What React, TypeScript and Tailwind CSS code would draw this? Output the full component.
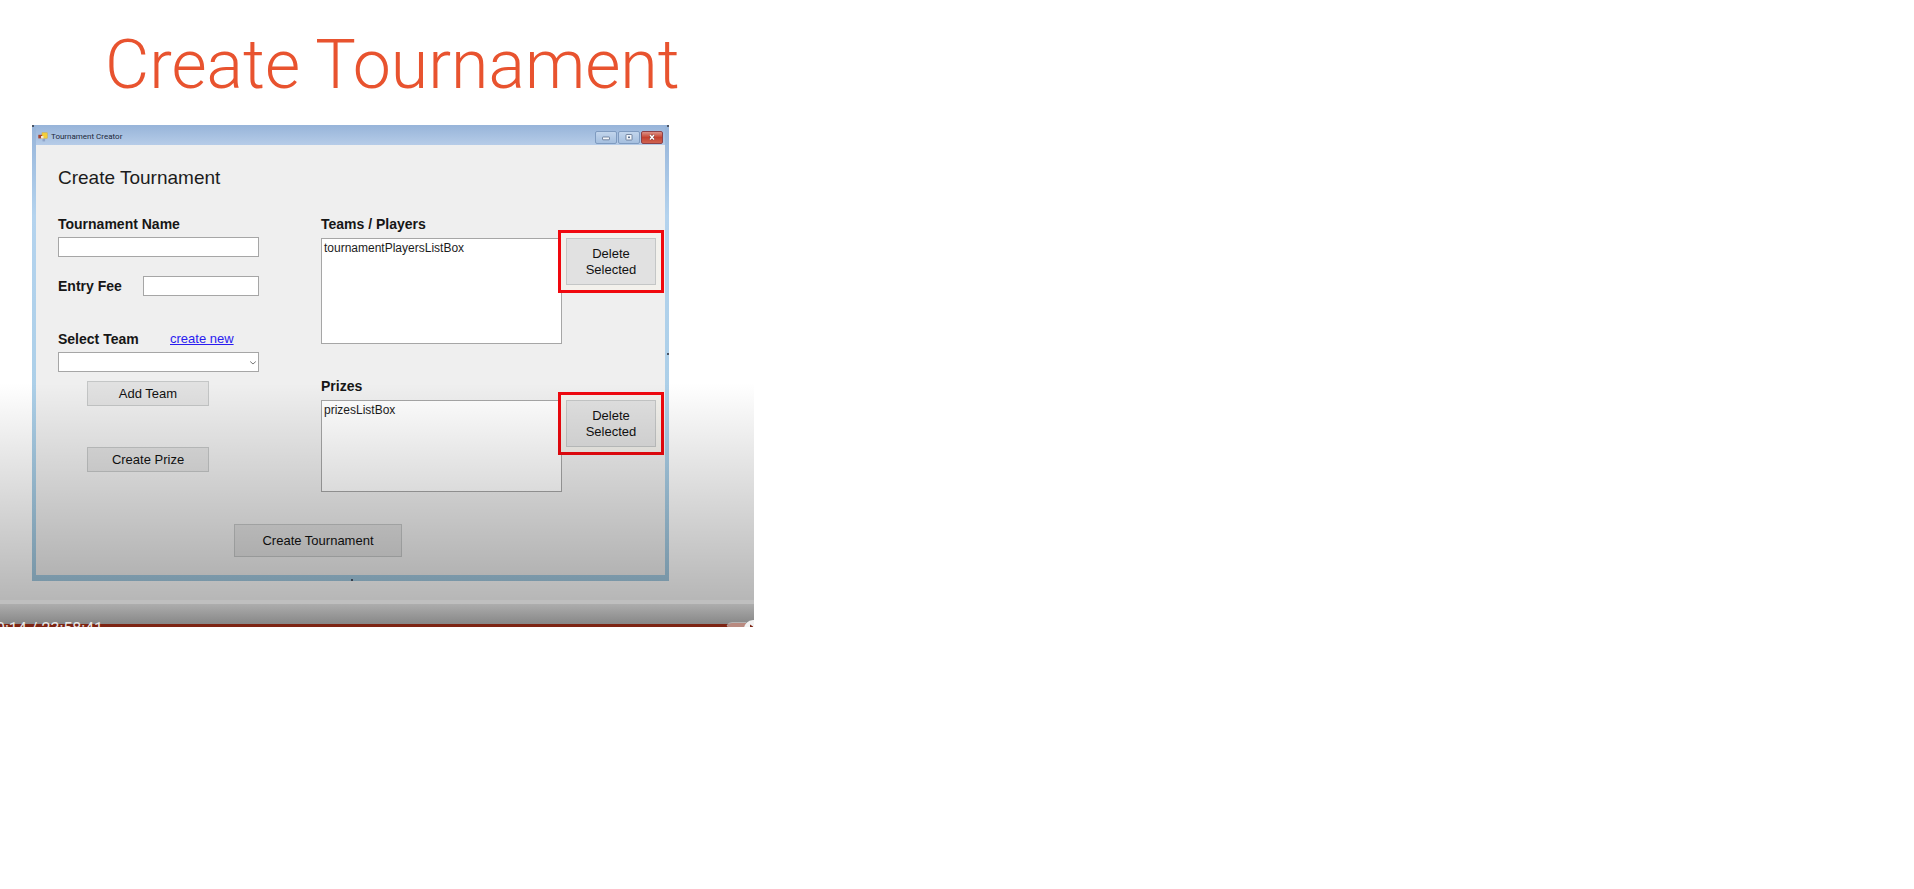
import React from "react";

const buttonClass =
  "border border-[#c4c6c6] bg-[#e1e1e1] text-center text-[13px] leading-4 text-[#111111]";
const labelClass = "text-[14px] font-bold leading-4 text-[#161616]";
const fieldClass = "border border-[#a6a6a6] bg-white px-1 text-[12px] outline-none";
const captionButtonClass =
  "h-[13px] w-[22px] rounded-xs border border-[#7f9bc0] bg-linear-to-b from-[#c2d5ec] to-[#a5bfdf]";
const handleClass = "absolute h-[2px] w-[2px] bg-[#4a5566]";

function DeleteButton() {
  return (
    <div className="relative mt-[22px] h-[47px] w-[90px] shrink-0">
      <div className="absolute -bottom-2 -left-2 -right-2 -top-2 border-3 border-[#f0080e] bg-[#f3f1ec]" />
      <button type="button" className={`relative h-full w-full ${buttonClass}`}>
        Delete
        <br />
        Selected
      </button>
    </div>
  );
}

type ListPanelProps = { id: string; title: string; item: string; listClass: string };

function ListPanel({ id, title, item, listClass }: ListPanelProps) {
  return (
    <div className="flex gap-1">
      <div className="min-w-0 flex-1">
        <h3 id={id} className={labelClass}>
          {title}
        </h3>
        <ul
          aria-labelledby={id}
          className={`mt-[6px] border border-[#a6a6a6] bg-white px-[2px] pt-px text-[12px] leading-4 text-[#1c1c1c] ${listClass}`}
        >
          <li>{item}</li>
        </ul>
      </div>
      <DeleteButton />
    </div>
  );
}

function FormIcon() {
  return (
    <svg viewBox="0 0 10 10" className="h-[10px] w-[10px]" aria-hidden="true">
      <rect x="4" y="0.8" width="5.2" height="5.4" fill="#f3cf3a" stroke="#d9a92c" strokeWidth="0.5" />
      <rect x="0.3" y="2.8" width="3.8" height="3.6" fill="#a8432f" />
      <rect x="3" y="4" width="2.5" height="2.5" fill="#f6ead0" />
      <rect x="4.5" y="6.8" width="2.6" height="2.6" fill="#8fa3c8" />
    </svg>
  );
}

function TitleBar() {
  return (
    <div className="flex h-[20px] items-center bg-linear-to-b from-[#97b4d9] to-[#b6cce8] pl-[2px] pr-[2px] pt-1">
      <FormIcon />
      <span className="ml-[3px] flex-1 font-[Roboto,sans-serif] text-[8px] leading-3 text-[#20283a]">
        Tournament Creator
      </span>
      <div className="flex gap-px">
        <button type="button" aria-label="Minimize" className={captionButtonClass}>
          <svg viewBox="0 0 20 11" className="h-full w-full">
            <rect x="6.5" y="5" width="7" height="2.8" rx="0.5" fill="#f4f7fb" stroke="#5c6f8d" strokeWidth="0.8" />
          </svg>
        </button>
        <button type="button" aria-label="Maximize" className={captionButtonClass}>
          <svg viewBox="0 0 20 11" className="h-full w-full">
            <rect x="7" y="2.5" width="6" height="5.5" rx="0.5" fill="#f4f7fb" stroke="#5c6f8d" strokeWidth="0.8" />
            <rect x="9" y="4.5" width="2" height="1.6" fill="#5c6f8d" />
          </svg>
        </button>
        <button
          type="button"
          aria-label="Close"
          className="h-[13px] w-[22px] rounded-xs border border-[#8d4148] bg-linear-to-b from-[#dc9086] via-[#c4412f] to-[#cf6250]"
        >
          <svg viewBox="0 0 20 11" className="h-full w-full">
            <path d="M8 3L12 7.5M12 3L8 7.5" stroke="#6b2a2a" strokeWidth="2.6" />
            <path d="M8 3L12 7.5M12 3L8 7.5" stroke="#ffffff" strokeWidth="1.6" />
          </svg>
        </button>
      </div>
    </div>
  );
}

function TournamentForm() {
  return (
    <form className="bg-[#efefef] pb-[18px] pl-[22px] pr-[9px] pt-[21px]" onSubmit={(e) => e.preventDefault()}>
      <h2 className="text-[19px] leading-6 text-[#1c1c1c]">Create Tournament</h2>
      <div className="mt-[26px] flex gap-[62px]">
        <div className="flex w-[201px] flex-col">
          <label htmlFor="name" className={labelClass}>
            Tournament Name
          </label>
          <input id="name" className={`mt-[5px] h-[20px] w-full ${fieldClass}`} />
          <div className="mt-[19px] flex items-center justify-between">
            <label htmlFor="fee" className={labelClass}>
              Entry Fee
            </label>
            <input id="fee" className={`h-[20px] w-[116px] ${fieldClass}`} />
          </div>
          <div className="mt-[35px] flex items-center">
            <label htmlFor="team" className={`w-28 ${labelClass}`}>
              Select Team
            </label>
            <a href="#new" className="text-[13px] leading-4 text-[#2a1cf0] underline">
              create new
            </a>
          </div>
          <div className="relative mt-[5px]">
            <select id="team" className={`block h-[20px] w-full appearance-none ${fieldClass}`} />
            <svg viewBox="0 0 8 6" className="pointer-events-none absolute right-[2px] top-[8px] h-[6px] w-[8px]">
              <path d="M1.2 1.5L4 4L6.8 1.5" fill="none" stroke="#777777" strokeWidth="1" />
            </svg>
          </div>
          <button type="button" className={`ml-[29px] mt-[9px] h-[25px] w-[122px] ${buttonClass}`}>
            Add Team
          </button>
          <button type="button" className={`ml-[29px] mt-[41px] h-[25px] w-[122px] ${buttonClass}`}>
            Create Prize
          </button>
        </div>
        <div className="flex min-w-0 flex-1 flex-col gap-[34px]">
          <ListPanel id="players" title="Teams / Players" item="tournamentPlayersListBox" listClass="h-[106px]" />
          <ListPanel id="prizes" title="Prizes" item="prizesListBox" listClass="h-[92px]" />
        </div>
      </div>
      <button type="submit" className={`ml-44 mt-[32px] h-[33px] w-[168px] ${buttonClass}`}>
        Create Tournament
      </button>
    </form>
  );
}

export default function App() {
  return (
    <main className="min-h-screen bg-white font-['Liberation_Sans',Arial,sans-serif]">
      <section className="relative w-[754px] overflow-hidden">
        <h1 className="pl-[105px] pt-[25px] font-[Roboto,sans-serif] text-[68px] font-light leading-20 text-[#e8532f]">
          Create Tournament
        </h1>
        <div className="relative ml-8 mt-5 w-[637px] bg-linear-to-b from-[#97b4d9] via-[#b4d3ee] via-20% to-[#a3cbe2] px-1 pb-[6px]">
          <TitleBar />
          <TournamentForm />
          <span className={`left-0 top-0 ${handleClass}`} />
          <span className={`right-0 top-0 ${handleClass}`} />
          <span className={`right-0 top-1/2 ${handleClass}`} />
          <span className={`bottom-0 left-1/2 ${handleClass}`} />
        </div>
        <div className="h-[46px]" />
        <div className="pointer-events-none absolute inset-x-0 bottom-0 h-[244px] bg-linear-to-b from-black/0 to-black/32" />
        <div className="absolute inset-x-0 bottom-0">
          <div className="h-1 bg-[#bfbfbf]" />
          <div className="h-[23px] border-b-3 border-[#7d2413] bg-linear-to-b from-[#adadad] to-[#878787]" />
          <div className="absolute bottom-0 left-0 h-[6px] w-28 overflow-hidden">
            <p className="-ml-1 whitespace-nowrap font-[Roboto,sans-serif] text-[16px] leading-4 text-[#e8e8e8]">
              0:14 / 23:58:41
            </p>
          </div>
          <svg viewBox="0 0 28 8" className="absolute bottom-0 right-0 h-[8px] w-[28px]" aria-hidden="true">
            <path d="M1 8Q2 4 6 4H28V8Z" fill="#b98a80" />
            <path d="M1 7Q2 3.5 6 3.5H20" fill="none" stroke="#b3b3b3" />
            <circle cx="27" cy="10" r="9" fill="#f2f2f2" />
            <path d="M24 5.5L27 7.5V8H24Z" fill="#7d2413" />
          </svg>
        </div>
      </section>
    </main>
  );
}
